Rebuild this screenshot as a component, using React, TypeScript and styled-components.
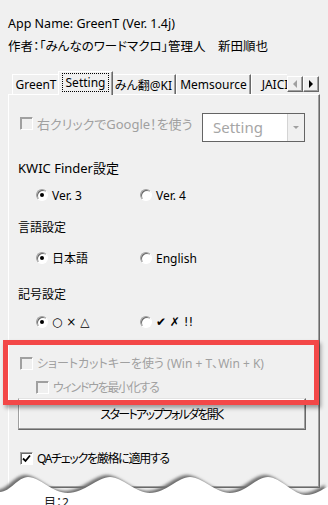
import React from 'react';
import styled, { createGlobalStyle, css } from 'styled-components';

const GlobalStyle = createGlobalStyle`
  html, body {
    margin: 0;
    padding: 0;
    background: #ffffff;
  }
  body {
    font-family: "Noto Sans", "Noto Sans CJK JP", sans-serif;
    font-size: 12px;
    color: #000;
  }
`;

const Window = styled.div`
  position: relative;
  width: 328px;
  height: 505px;
  overflow: hidden;
  box-sizing: border-box;
  padding: 14px 8px 0 8px;
  background: #f0f0f0;
  font-feature-settings: "palt" 1;
`;

const InfoLine = styled.div`
  height: 20px;
  line-height: 20px;
  font-size: 12.5px;
  white-space: nowrap;
  & + & {
    margin-top: 3px;
  }
`;

const TabStrip = styled.div`
  position: relative;
  z-index: 2;
  display: flex;
  align-items: flex-end;
  height: 24px;
  margin-top: 14px;
  margin-bottom: -1px;
`;

const Tabs = styled.div`
  flex: 1;
  display: flex;
  align-items: flex-end;
  height: 24px;
  overflow: hidden;
  padding-left: 4px;
`;

const Tab = styled.div<{ $w: number; $active?: boolean }>`
  flex: none;
  box-sizing: border-box;
  width: ${p => p.$w}px;
  height: 20px;
  margin-bottom: 1px;
  border-top: 1px solid #fff;
  border-left: 1px solid #fff;
  border-right: 1px solid #696969;
  box-shadow: inset -1px 0 0 #a0a0a0;
  display: flex;
  align-items: center;
  justify-content: center;
  white-space: nowrap;
  background: #f0f0f0;
  ${p => p.$active && css`
    height: 24px;
    margin: 0 -2px;
    padding-bottom: 2px;
    position: relative;
    z-index: 1;
  `}
`;

const FocusRing = styled.span`
  box-sizing: border-box;
  height: 19px;
  line-height: 17px;
  padding: 0 3px;
  border: 1px dotted #000;
`;

const ScrollButtons = styled.div`
  flex: none;
  display: flex;
  margin: 0 1px 3px 0;
`;

const ScrollButton = styled.div`
  width: 16px;
  height: 16px;
  box-sizing: border-box;
  border: 1px solid;
  border-color: #fff #696969 #696969 #fff;
  box-shadow: inset -1px -1px 0 #a0a0a0;
  display: flex;
  align-items: center;
  justify-content: center;
`;

const Arrow = styled.span<{ $dir: 'left' | 'right'; $disabled?: boolean }>`
  width: 0;
  height: 0;
  border-top: 4px solid transparent;
  border-bottom: 4px solid transparent;
  ${p => p.$dir === 'left'
    ? css`border-right: 4px solid ${p.$disabled ? '#a0a0a0' : '#000'};`
    : css`border-left: 4px solid ${p.$disabled ? '#a0a0a0' : '#000'};`}
`;

const Panel = styled.div`
  position: relative;
  z-index: 1;
  box-sizing: border-box;
  height: 394px;
  border: 1px solid;
  border-color: #fff #696969 #696969 #fff;
  box-shadow: inset -1px -1px 0 #a0a0a0;
  display: flex;
  flex-direction: column;
`;

const TopRow = styled.div`
  display: flex;
  justify-content: space-between;
  align-items: flex-start;
  margin-top: 18px;
  padding: 0 14px 0 11px;
`;

const Option = styled.label<{ $disabled?: boolean; $indent?: number; $mt?: number; $size?: number; $tight?: number }>`
  display: flex;
  align-items: center;
  gap: 4px;
  height: 20px;
  white-space: nowrap;
  padding-left: ${p => p.$indent ?? 11}px;
  margin-top: ${p => p.$mt ?? 0}px;
  font-size: ${p => p.$size ?? 12}px;
  letter-spacing: ${p => p.$tight ?? 0}px;
  color: ${p => (p.$disabled ? '#a0a0a0' : '#000')};
`;

const Box = styled.span<{ $disabled?: boolean }>`
  flex: none;
  box-sizing: border-box;
  width: 13px;
  height: 13px;
  border: 1px solid;
  border-color: #a0a0a0 #fff #fff #a0a0a0;
  box-shadow: inset 1px 1px 0 ${p => (p.$disabled ? '#a0a0a0' : '#696969')};
  background: ${p => (p.$disabled ? '#f0f0f0' : '#fff')};
  display: flex;
  align-items: center;
  justify-content: center;
`;

const Combo = styled.div`
  box-sizing: border-box;
  width: 103px;
  height: 29px;
  border: 1px solid #646464;
  background: #fff;
  display: flex;
`;

const ComboText = styled.div`
  flex: 1;
  padding-left: 10px;
  line-height: 27px;
  font-size: 15px;
  color: #a6a6a6;
`;

const ComboButton = styled.div`
  width: 16px;
  background: #f0f0f0;
  border-left: 1px solid #d4d4d4;
  display: flex;
  align-items: center;
  justify-content: center;
`;

const DownArrow = styled.span`
  width: 0;
  height: 0;
  border-left: 3px solid transparent;
  border-right: 3px solid transparent;
  border-top: 3px solid #a0a0a0;
`;

const Heading = styled.div<{ $mt: number; $size?: number }>`
  height: 20px;
  line-height: 20px;
  padding-left: 9px;
  margin-top: ${p => p.$mt}px;
  font-size: ${p => p.$size ?? 12}px;
  white-space: nowrap;
`;

const RadioRow = styled.div<{ $mt: number }>`
  display: flex;
  height: 20px;
  padding-left: 27px;
  margin-top: ${p => p.$mt}px;
`;

const RadioOption = styled.label`
  display: flex;
  align-items: center;
  gap: 4px;
  width: 104px;
  white-space: nowrap;
`;

const Radio = styled.span<{ $on?: boolean }>`
  flex: none;
  box-sizing: border-box;
  width: 12px;
  height: 12px;
  border-radius: 50%;
  border: 1px solid;
  border-color: #a0a0a0 #fff #fff #a0a0a0;
  box-shadow: inset 1px 1px 0 #696969;
  background: #fff;
  display: flex;
  align-items: center;
  justify-content: center;
  &::after {
    content: "";
    display: ${p => (p.$on ? 'block' : 'none')};
    width: 4px;
    height: 4px;
    border-radius: 50%;
    background: #000;
  }
`;

const Symbols = styled.span`
  font-family: "DejaVu Sans", "Noto Sans", sans-serif;
  font-size: 12px;
`;

const PushButton = styled.div`
  box-sizing: border-box;
  height: 32px;
  margin: 1px 13px 0 9px;
  border: 1px solid;
  border-color: #e3e3e3 #696969 #696969 #a0a0a0;
  box-shadow: inset -1px -1px 0 #a0a0a0, inset 1px 1px 0 #fff;
  display: flex;
  align-items: center;
  justify-content: center;
  white-space: nowrap;
  letter-spacing: -1.7px;
`;

const Highlight = styled.div`
  position: absolute;
  z-index: 5;
  left: 3px;
  top: 340px;
  width: 316px;
  height: 65px;
  box-sizing: border-box;
  border: 5px solid #f34848;
  box-shadow: 2px 3px 4px rgba(0, 0, 0, 0.35);
`;

const Tear = styled.svg`
  position: absolute;
  z-index: 6;
  left: 0;
  bottom: 0;
  display: block;
`;

const Peek = styled.span`
  position: absolute;
  z-index: 7;
  left: 44px;
  top: 493px;
  color: #222;
`;

const CheckBox: React.FC<{ checked?: boolean; disabled?: boolean }> = ({ checked, disabled }) => (
  <Box $disabled={disabled}>
    {checked && (
      <svg width="9" height="9" viewBox="0 0 9 9">
        <polyline points="1,4.5 3.5,7 8,1.5" fill="none" stroke="#000" strokeWidth="1.8" />
      </svg>
    )}
  </Box>
);

const wave =
  'M0,27 C10,27 18,12 28,12 C40,12 52,28 68,28 C84,28 98,12 110,12 C122,12 136,28 150,28 ' +
  'C166,28 178,12 190,12 C202,12 216,28 230,28 C246,28 256,12 268,12 C280,12 294,30 306,30 ' +
  'C316,30 322,24 328,22';

const App: React.FC = () => (
  <>
    <GlobalStyle />
    <Window>
      <InfoLine>App Name: GreenT (Ver. 1.4j)</InfoLine>
      <InfoLine>作者：「みんなのワードマクロ」管理人　新田順也</InfoLine>

      <TabStrip>
        <Tabs>
          <Tab $w={48}>GreenT</Tab>
          <Tab $w={55} $active>
            <FocusRing>Setting</FocusRing>
          </Tab>
          <Tab $w={65}>みん翻@KI</Tab>
          <Tab $w={75}>Memsource</Tab>
          <Tab $w={48}>JAICI</Tab>
        </Tabs>
        <ScrollButtons>
          <ScrollButton><Arrow $dir="left" $disabled /></ScrollButton>
          <ScrollButton><Arrow $dir="right" /></ScrollButton>
        </ScrollButtons>
      </TabStrip>

      <Panel>
        <TopRow>
          <Option $disabled $indent={0} $size={13}>
            <CheckBox disabled />
            右クリックでGoogle！を使う
          </Option>
          <Combo>
            <ComboText>Setting</ComboText>
            <ComboButton><DownArrow /></ComboButton>
          </Combo>
        </TopRow>

        <Heading $mt={16} $size={13}>KWIC Finder設定</Heading>
        <RadioRow $mt={7}>
          <RadioOption><Radio $on />Ver. 3</RadioOption>
          <RadioOption><Radio />Ver. 4</RadioOption>
        </RadioRow>

        <Heading $mt={13}>言語設定</Heading>
        <RadioRow $mt={10}>
          <RadioOption><Radio $on />日本語</RadioOption>
          <RadioOption><Radio />English</RadioOption>
        </RadioRow>

        <Heading $mt={17}>記号設定</Heading>
        <RadioRow $mt={7}>
          <RadioOption><Radio $on /><Symbols>○ × △</Symbols></RadioOption>
          <RadioOption><Radio /><Symbols>✔ ✗ !!</Symbols></RadioOption>
        </RadioRow>

        <Option $disabled $mt={21}>
          <CheckBox disabled />
          ショートカットキーを使う (Win + T、Win + K)
        </Option>
        <Option $disabled $indent={27} $mt={4} $tight={-1.3}>
          <CheckBox disabled />
          ウィンドウを最小化する
        </Option>

        <PushButton>スタートアップフォルダを開く</PushButton>

        <Option $mt={18} $tight={-1.3}>
          <CheckBox checked />
          QAチェックを厳格に適用する
        </Option>
      </Panel>

      <Highlight />

      <Tear width="328" height="40" viewBox="0 0 328 40">
        <defs>
          <filter id="tearShade" x="-10%" y="-50%" width="120%" height="200%">
            <feGaussianBlur stdDeviation="1.8" />
          </filter>
        </defs>
        <path d={`${wave} L328,40 L0,40 Z`} transform="translate(-3,-2)" fill="#707070" filter="url(#tearShade)" />
        <path d={`${wave} L328,40 L0,40 Z`} fill="#ffffff" />
      </Tear>
      <Peek>目：2</Peek>
    </Window>
  </>
);

export default App;
